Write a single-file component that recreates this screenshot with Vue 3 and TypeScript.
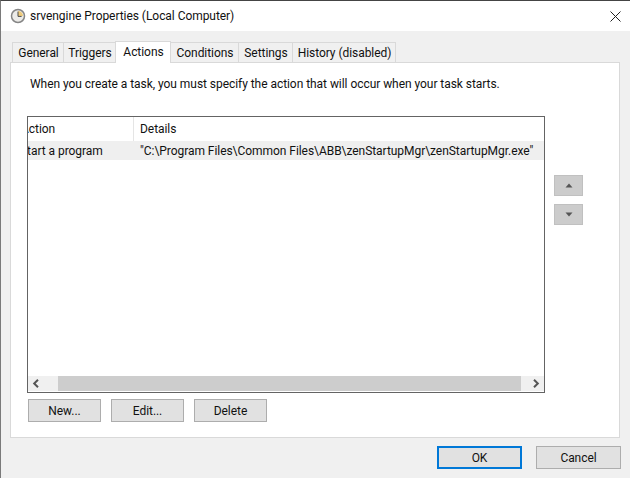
<script setup lang="ts">
const tabs: string[] = ['General', 'Triggers', 'Actions', 'Conditions', 'Settings', 'History (disabled)']
const tabWidths: Record<string, number> = { General: 52, Triggers: 53, Actions: 56, Conditions: 69, Settings: 55, 'History (disabled)': 104 }
</script>

<template>
  <div class="window">
    <header class="title">
      <svg class="clock" width="16" height="16" viewBox="0 0 16 16">
        <circle cx="8" cy="8" r="6.5" fill="#ecebe8" stroke="#858585" stroke-width="1.5" />
        <path d="M8 3A5 5 0 0 1 13 8H8Z" fill="#eecb7c" />
        <path d="M8 3.6V8.4H11.6" fill="none" stroke="#4a4a4a" stroke-width="1" />
      </svg>
      <span class="title-text">srvengine Properties (Local Computer)</span>
      <svg class="close" width="11" height="11" viewBox="0 0 11 11">
        <path d="M.5.5 10.5 10.5M10.5.5.5 10.5" stroke="#222" stroke-width="1" fill="none" />
      </svg>
    </header>

    <main class="body">
      <nav class="tabs">
        <div
          v-for="t in tabs"
          :key="t"
          class="tab"
          :class="{ active: t === 'Actions' }"
          :style="{ width: tabWidths[t] + 'px' }"
        >{{ t }}</div>
      </nav>

      <section class="panel">
        <p class="intro">When you create a task, you must specify the action that will occur when your task starts.</p>

        <div class="list-row">
          <div class="list">
            <div class="list-head">
              <div class="col-a"><span class="shift">Action</span></div>
              <div class="col-b">Details</div>
            </div>
            <div class="list-item">
              <div class="col-a"><span class="shift">Start a program</span></div>
              <div class="col-b">"C:\Program Files\Common Files\ABB\zenStartupMgr\zenStartupMgr.exe"</div>
            </div>
            <div class="list-fill"></div>
            <div class="scrollbar">
              <div class="sb-btn left">
                <svg width="8" height="9" viewBox="0 0 8 9"><path d="M6 .8 2.2 4.5 6 8.2" fill="none" stroke="#555" stroke-width="2" /></svg>
              </div>
              <div class="sb-thumb"></div>
              <div class="sb-btn right">
                <svg width="8" height="9" viewBox="0 0 8 9"><path d="M2 .8 5.8 4.5 2 8.2" fill="none" stroke="#555" stroke-width="2" /></svg>
              </div>
            </div>
          </div>
          <div class="movers">
            <div class="mover"><svg width="8" height="5" viewBox="0 0 8 5"><path d="M4 .5 7.5 4.5H.5Z" fill="#555" /></svg></div>
            <div class="mover"><svg width="8" height="5" viewBox="0 0 8 5"><path d="M4 4.5 7.5 .5H.5Z" fill="#555" /></svg></div>
          </div>
        </div>

        <div class="actions">
          <button class="btn small">New...</button>
          <button class="btn small">Edit...</button>
          <button class="btn small">Delete</button>
        </div>
      </section>

      <footer class="footer">
        <button class="btn big primary">OK</button>
        <button class="btn big">Cancel</button>
      </footer>
    </main>
  </div>
</template>

<style>
html, body { margin: 0; background: #f0f0f0; }
</style>

<style scoped>
.window {
  width: 630px;
  height: 478px;
  box-sizing: border-box;
  border-top: 1px solid #444;
  border-left: 1px solid #7a7a7a;
  display: flex;
  flex-direction: column;
  font: 12px Roboto, "Noto Sans", sans-serif;
  letter-spacing: -0.05px;
  color: #111;
  background: #f0f0f0;
  overflow: hidden;
}
.title {
  height: 30px;
  flex: none;
  background: #fff;
  display: flex;
  align-items: center;
  padding-left: 9px;
}
.title-text { margin-left: 4px; }
.close { margin-left: auto; margin-right: 9px; }
.body { flex: 1; display: flex; flex-direction: column; padding: 0 0 0 9px; }
.tabs { height: 31px; display: flex; align-items: flex-end; padding-left: 2px; position: relative; z-index: 1; }
.tab {
  height: 20px;
  box-sizing: border-box;
  border: 1px solid #d9d9d9;
  border-bottom: none;
  margin-right: -1px;
  padding-left: 1px;
  background: #f0f0f0;
  text-align: center;
  line-height: 21px;
  white-space: nowrap;
}
.tab.active {
  height: 22px;
  background: #fff;
  line-height: 21px;
  margin-bottom: -1px;
  padding-bottom: 1px;
  position: relative;
}
.panel {
  width: 610px;
  height: 376px;
  box-sizing: border-box;
  background: #fff;
  border: 1px solid #d9d9d9;
  padding: 13px 0 0 16px;
  flex: none;
}
.intro { margin: 0; height: 16px; line-height: 16px; padding-left: 3px; white-space: nowrap; }
.list-row { display: flex; margin-top: 24px; }
.list {
  width: 518px;
  height: 277px;
  box-sizing: border-box;
  border: 1px solid #646464;
  display: flex;
  flex-direction: column;
  overflow: hidden;
}
.list-head { height: 24px; display: flex; flex: none; line-height: 24px; }
.list-head .col-a { border-right: 1px solid #e5e5e5; }
.list-item { height: 19px; display: flex; flex: none; background: #efefef; line-height: 20px; }
.col-a { width: 105px; flex: none; overflow: hidden; white-space: nowrap; }
.list-item .col-a { width: 106px; }
.shift { display: inline-block; margin-left: -7px; }
.list-item .shift { margin-left: -8px; }
.col-b { padding-left: 6px; white-space: nowrap; }
.list-fill { flex: 1; }
.scrollbar { height: 15px; display: flex; flex: none; margin-bottom: 1px; }
.sb-btn { background: #f0f0f0; display: flex; align-items: center; justify-content: center; }
.sb-btn.left { width: 30px; justify-content: flex-start; padding-left: 4px; box-sizing: border-box; }
.sb-btn.right { width: 23px; justify-content: flex-end; padding-right: 4px; box-sizing: border-box; }
.sb-thumb { flex: 1; background: #cdcdcd; }
.movers { margin-left: 9px; padding-top: 59px; display: flex; flex-direction: column; gap: 8px; }
.mover {
  width: 29px;
  height: 21px;
  box-sizing: border-box;
  background: #cccccc;
  border: 1px solid #c0c0c0;
  display: flex;
  align-items: center;
  justify-content: center;
}
.actions { display: flex; gap: 10px; margin-top: 6px; margin-left: 1px; }
.btn {
  box-sizing: border-box;
  padding: 1px 0 0;
  background: #e1e1e1;
  border: 1px solid #adadad;
  font: inherit;
  letter-spacing: inherit;
  color: #111;
  border-radius: 0;
}
.small { width: 73px; height: 23px; }
.big { width: 85px; height: 23px; }
.primary { border: 2px solid #0078d7; }
.footer { display: flex; gap: 14px; margin-top: 8px; margin-left: 427px; }
</style>
